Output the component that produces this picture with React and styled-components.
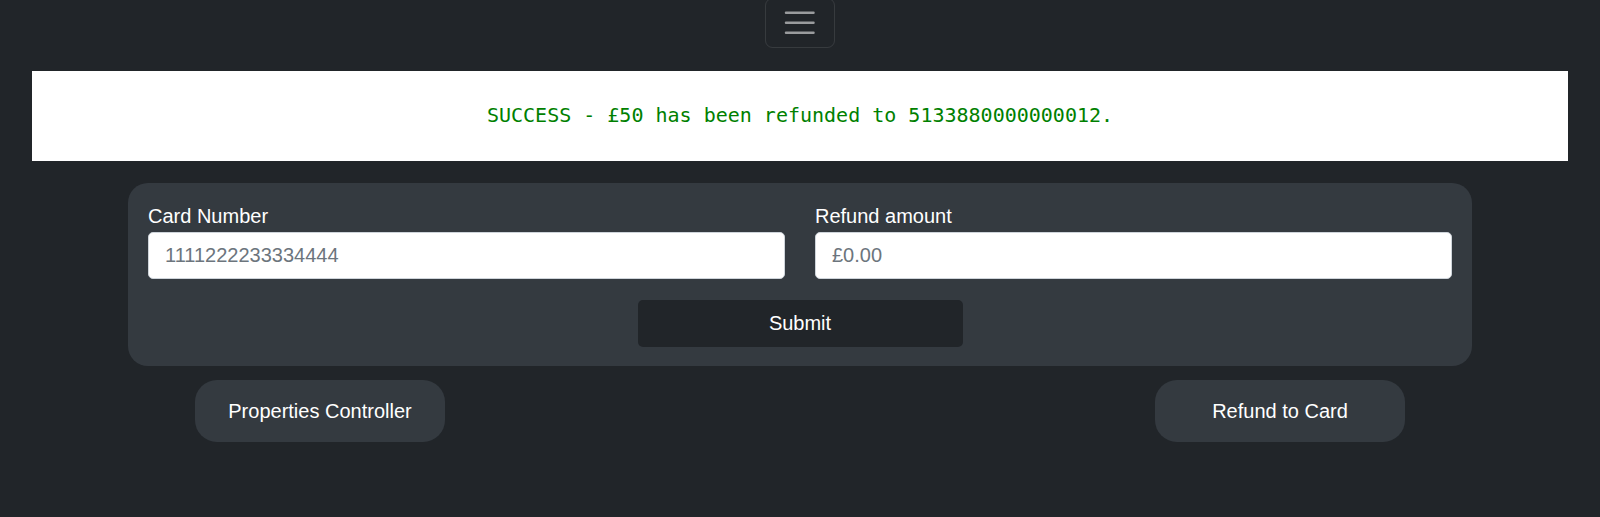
import React from "react";
import styled, { createGlobalStyle } from "styled-components";

const GlobalStyle = createGlobalStyle`
  html, body {
    margin: 0;
    padding: 0;
    background: #212529;
    font-family: "Liberation Sans", Arial, sans-serif;
  }
  * { box-sizing: border-box; }
`;

const Page = styled.div`
  min-height: 517px;
  background: #212529;
  display: flex;
  flex-direction: column;
`;

const Header = styled.header`
  display: flex;
  justify-content: center;
  margin-top: -2px;
`;

const Toggler = styled.button`
  width: 69.5px;
  height: 49.5px;
  padding: 5px 15px;
  background: transparent;
  border: 1px solid rgba(255, 255, 255, 0.1);
  border-radius: 7.5px;
  display: flex;
  align-items: center;
  justify-content: center;
  cursor: pointer;
`;

const Banner = styled.div`
  width: 96%;
  height: 90px;
  margin: 23.5px auto 0;
  padding-bottom: 2px;
  background: #ffffff;
  display: flex;
  align-items: center;
  justify-content: center;
`;

const Message = styled.code`
  font-family: "DejaVu Sans Mono", "Liberation Mono", monospace;
  font-size: 20px;
  color: #008000;
`;

const Panel = styled.form`
  width: 84%;
  margin: 21.5px auto 0;
  background: #343a40;
  border-radius: 20px;
  padding: 21.5px 20px 19.5px;
  display: flex;
  flex-direction: column;
`;

const Fields = styled.div`
  display: grid;
  grid-template-columns: 1fr 1fr;
  column-gap: 30px;
`;

const Field = styled.div`
  display: flex;
  flex-direction: column;
`;

const Label = styled.label`
  color: #ffffff;
  font-size: 20px;
  line-height: 24px;
  margin-bottom: 4px;
`;

const Input = styled.input`
  height: 47px;
  width: 100%;
  padding: 0 16px;
  font-family: "Liberation Sans", Arial, sans-serif;
  font-size: 20px;
  color: #212529;
  background: #ffffff;
  border: 1px solid #ced4da;
  border-radius: 5px;
  outline: none;
  &::placeholder {
    color: #6c757d;
  }
`;

const Submit = styled.button`
  align-self: center;
  width: 325px;
  height: 47px;
  margin-top: 20.5px;
  background: #212529;
  color: #ffffff;
  border: none;
  border-radius: 5px;
  font-family: "Liberation Sans", Arial, sans-serif;
  font-size: 20px;
  cursor: pointer;
`;

const NavRow = styled.nav`
  display: flex;
  justify-content: space-between;
  padding: 0 195px;
  margin-top: 14px;
`;

const NavButton = styled.button`
  width: 250px;
  height: 62px;
  background: #343a40;
  color: #ffffff;
  border: none;
  border-radius: 22px;
  font-family: "Liberation Sans", Arial, sans-serif;
  font-size: 20px;
  cursor: pointer;
`;

const MenuIcon = () => (
  <svg width="37.5" height="37.5" viewBox="0 0 30 30" aria-hidden="true">
    <path
      d="M4 7h22M4 15h22M4 23h22"
      stroke="rgba(255,255,255,0.55)"
      strokeWidth="2"
      strokeLinecap="round"
      strokeMiterlimit="10"
      fill="none"
    />
  </svg>
);

export default function App() {
  return (
    <>
      <GlobalStyle />
      <Page>
        <Header>
          <Toggler type="button" aria-label="Toggle navigation">
            <MenuIcon />
          </Toggler>
        </Header>
        <Banner>
          <Message>SUCCESS - £50 has been refunded to 5133880000000012.</Message>
        </Banner>
        <Panel onSubmit={(e) => e.preventDefault()}>
          <Fields>
            <Field>
              <Label htmlFor="card">Card Number</Label>
              <Input id="card" placeholder="1111222233334444" />
            </Field>
            <Field>
              <Label htmlFor="amount">Refund amount</Label>
              <Input id="amount" placeholder="£0.00" />
            </Field>
          </Fields>
          <Submit type="submit">Submit</Submit>
        </Panel>
        <NavRow>
          <NavButton type="button">Properties Controller</NavButton>
          <NavButton type="button">Refund to Card</NavButton>
        </NavRow>
      </Page>
    </>
  );
}
